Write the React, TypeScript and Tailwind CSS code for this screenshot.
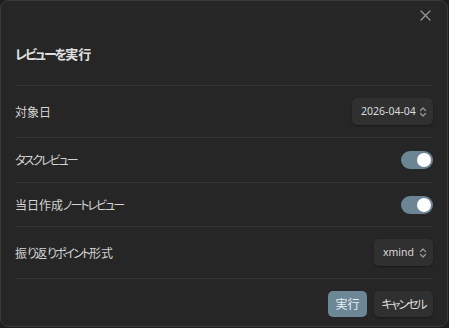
import React from "react";

const UpDown = () => (
  <svg width="8" height="10" viewBox="0 0 8 10" fill="none" stroke="currentColor" strokeWidth={1.2} strokeLinecap="round" strokeLinejoin="round">
    <path d="M1.5 3.5L4 1l2.5 2.5" />
    <path d="M1.5 6.5L4 9l2.5-2.5" />
  </svg>
);

// かな部分だけ字詰めを強くする
function Jp({ text }: { text: string }) {
  const parts = text.split(/([\u3040-\u30ff]+)/).filter(Boolean);
  return (
    <>
      {parts.map((p, i) =>
        /[\u3040-\u30ff]/.test(p) ? (
          <span key={i} className="tracking-[-2px]">{p}</span>
        ) : (
          <span key={i}>{p}</span>
        )
      )}
    </>
  );
}

function Toggle({ on }: { on: boolean }) {
  return (
    <div className={`w-[32px] h-[18px] shrink-0 rounded-full p-[2px] flex ${on ? "justify-end bg-[#6c8594]" : "justify-start bg-[#444]"}`}>
      <div className="w-[14px] h-[14px] rounded-full bg-white"></div>
    </div>
  );
}

function Select({ value, width }: { value: string; width: string }) {
  return (
    <div className={`${width} h-[27px] shrink-0 rounded-[5px] bg-[#303030] shadow-[0_1px_2px_rgba(0,0,0,0.4)] flex items-center justify-between pl-[9px] pr-[6px] text-[10.5px] text-[#dadada] whitespace-nowrap font-['Noto_Sans',sans-serif]`}>
      <span>{value}</span>
      <span className="text-[#999]"><UpDown /></span>
    </div>
  );
}

export default function App() {
  // 設定行の定義
  const rows = [
    { label: "対象日", h: "h-[52px]", ctrl: <Select value="2026-04-04" width="w-[81px]" /> },
    { label: "タスクレビュー", h: "h-[45px]", ctrl: <Toggle on /> },
    { label: "当日作成ノートレビュー", h: "h-[44px]", ctrl: <Toggle on /> },
    { label: "振り返りポイント形式", h: "h-[52px]", ctrl: <Select value="xmind" width="w-[59px]" /> },
  ];

  return (
    <div className="w-[449px] h-[328px] bg-[#1e1e1e] font-['Noto_Sans_CJK_JP',sans-serif] [font-feature-settings:'palt']">
      <div className="w-[448px] h-[327px] border border-[#3a3a3a] rounded-[8px] bg-[#262626] flex flex-col px-[14px]">
        {/* ヘッダー */}
        <div className="h-[85px] shrink-0 border-b border-[#333] flex flex-col">
          <div className="flex justify-end pt-[9px] pr-[2px]">
            <svg width="11" height="11" viewBox="0 0 11 11" stroke="#9a9a9a" strokeWidth={1.2} strokeLinecap="round">
              <path d="M1 1l9 9M10 1l-9 9" />
            </svg>
          </div>
          <div className="mt-[26px] text-[13px] font-bold text-[#e0e0e0] leading-none"><Jp text="レビューを実行" /></div>
        </div>

        {rows.map((r, i) => (
          <div key={i} className={`${r.h} shrink-0 border-b border-[#333] flex items-center justify-between`}>
            <span className="text-[12px] text-[#d4d4d4]"><Jp text={r.label} /></span>
            {r.ctrl}
          </div>
        ))}

        {/* フッター */}
        <div className="flex justify-end gap-[7px] pt-[12px]">
          <button className="h-[26px] w-[39px] rounded-[5px] bg-[#6c8796] text-[12px] text-[#e8eef2] flex items-center justify-center">実行</button>
          <button className="h-[26px] w-[59px] rounded-[5px] bg-[#303030] shadow-[0_1px_2px_rgba(0,0,0,0.4)] text-[12px] text-[#dadada] flex items-center justify-center"><Jp text="キャンセル" /></button>
        </div>
      </div>
    </div>
  );
}
